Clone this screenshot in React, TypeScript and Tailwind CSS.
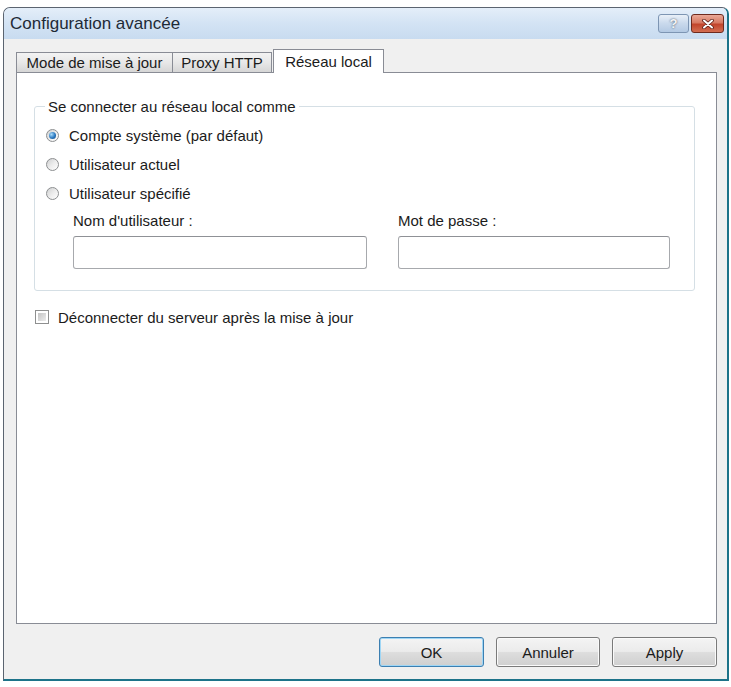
function Radio({ checked }: { checked?: boolean }) {
  return (
    <span className="w-[13px] h-[13px] shrink-0 rounded-full border border-[#8c8e90] bg-gradient-to-br from-[#cfd0d1] via-[#ececec] to-[#ffffff] flex items-center justify-center">
      {checked && (
        <span className="w-[7px] h-[7px] rounded-full bg-[radial-gradient(circle_at_35%_35%,#a9dcfb,#2a78c0_55%,#17497e)]" />
      )}
    </span>
  );
}

function Tab({ label, className }: { label: string; className: string }) {
  return (
    <div
      className={`h-[21px] flex items-center justify-center border border-[#898c95] bg-gradient-to-b from-[#f3f3f3] via-[#e8e8e8] to-[#d6d6d6] whitespace-nowrap ${className}`}
    >
      {label}
    </div>
  );
}

function Button({ label, primary, width }: { label: string; primary?: boolean; width: string }) {
  return (
    <button
      className={`${width} h-[30px] rounded-[3px] border flex items-center justify-center ${
        primary
          ? 'border-[#3c7fb1] shadow-[inset_0_0_0_1px_#9fd6f5]'
          : 'border-[#7a7a7a] shadow-[inset_0_0_0_1px_#fafafa]'
      } bg-[linear-gradient(to_bottom,#f4f4f4_0%,#ebebeb_48%,#dddddd_52%,#cfcfcf_100%)]`}
    >
      {label}
    </button>
  );
}

export default function App() {
  return (
    <div className="w-[731px] h-[687px] bg-white pt-[7px] pl-[3px] font-['Liberation_Sans',Arial,sans-serif] text-[15px] leading-[17px] text-[#1b1b1b]">
      <div className="w-[726px] h-[674px] flex flex-col rounded-t-[7px] border border-[#5b6470] border-r-2 border-b-2 border-r-[#1d7389] border-b-[#1d7389] bg-[#dce8f5] overflow-hidden">
        {/* title bar */}
        <div className="h-[31px] shrink-0 flex items-center pl-[6px] pr-[3px] bg-gradient-to-b from-[#e4eef9] via-[#d3e3f4] to-[#c8dbf0]">
          <span className="text-[17px] leading-none text-[#1e2a36]">Configuration avancée</span>
          <div className="ml-auto flex items-center gap-[2px]">
            <div className="w-[31px] h-[19px] rounded-[3px] border border-[#7d95b3] bg-gradient-to-b from-[#e9f0f8] via-[#c9d9ec] to-[#b3c9e3] flex items-center justify-center">
              <span className="text-[13px] font-bold leading-none text-[#f4f4f4] [text-shadow:0_0_2px_#37475a]">?</span>
            </div>
            <div className="w-[33px] h-[19px] rounded-[3px] border border-[#6e2a1e] bg-[linear-gradient(to_bottom,#eaa897_0%,#d77a63_45%,#c2452c_55%,#d36e52_100%)] flex items-center justify-center">
              <svg width="12" height="10" viewBox="0 0 12 10">
                <path d="M2 1.5 L10 8.5 M10 1.5 L2 8.5" stroke="#5a1d14" strokeWidth="3.6" strokeLinecap="round" />
                <path d="M2 1.5 L10 8.5 M10 1.5 L2 8.5" stroke="#ffffff" strokeWidth="2" strokeLinecap="round" />
              </svg>
            </div>
          </div>
        </div>

        {/* client area */}
        <div className="flex-1 flex flex-col bg-[#f0f0f0] pt-[10px] pl-[12px] pr-[10px]">
          {/* tabs */}
          <div className="h-[24px] flex items-end relative z-10 -mb-px">
            <Tab label="Mode de mise à jour" className="w-[157px]" />
            <Tab label="Proxy HTTP" className="w-[99px] border-l-0" />
            <div className="ml-[1px] w-[111px] h-[24px] flex items-start justify-center pt-[3px] border border-b-0 border-[#898c95] bg-white whitespace-nowrap">
              Réseau local
            </div>
          </div>

          {/* panel */}
          <div className="h-[552px] shrink-0 border border-[#898c95] bg-white flex flex-col">
            <fieldset className="mt-[25px] ml-[17px] mr-[21px] border border-[#d5dfe5] rounded-[3px] pb-[21px]">
              <legend className="ml-[10px] px-[3px]">Se connecter au réseau local comme</legend>
              <div className="mt-[6px] pl-[11px] flex flex-col">
                <label className="h-[29px] flex items-center gap-[10px]">
                  <Radio checked />
                  <span>Compte système (par défaut)</span>
                </label>
                <label className="h-[29px] flex items-center gap-[10px]">
                  <Radio />
                  <span>Utilisateur actuel</span>
                </label>
                <label className="h-[29px] flex items-center gap-[10px]">
                  <Radio />
                  <span>Utilisateur spécifié</span>
                </label>
              </div>
              <div className="mt-[4px] pl-[38px] flex gap-[31px]">
                <div className="w-[294px] flex flex-col">
                  <span>Nom d'utilisateur :</span>
                  <div className="mt-[7px] h-[33px] rounded-[3px] border border-[#a7a9ad] border-t-[#8f9196] bg-white" />
                </div>
                <div className="w-[272px] flex flex-col">
                  <span>Mot de passe :</span>
                  <div className="mt-[7px] h-[33px] rounded-[3px] border border-[#a7a9ad] border-t-[#8f9196] bg-white" />
                </div>
              </div>
            </fieldset>

            <label className="mt-[16px] ml-[18px] h-[20px] flex items-center gap-[9px]">
              <span className="w-[14px] h-[14px] shrink-0 border border-[#8e8f8f] bg-white p-[2px]">
                <span className="block w-full h-full bg-gradient-to-br from-[#c4c4c4] to-[#ececec]" />
              </span>
              <span>Déconnecter du serveur après la mise à jour</span>
            </label>
          </div>

          {/* buttons */}
          <div className="mt-[13px] flex justify-end gap-[12px]">
            <Button label="OK" primary width="w-[105px]" />
            <Button label="Annuler" width="w-[104px]" />
            <Button label="Apply" width="w-[105px]" />
          </div>
        </div>
      </div>
    </div>
  );
}
